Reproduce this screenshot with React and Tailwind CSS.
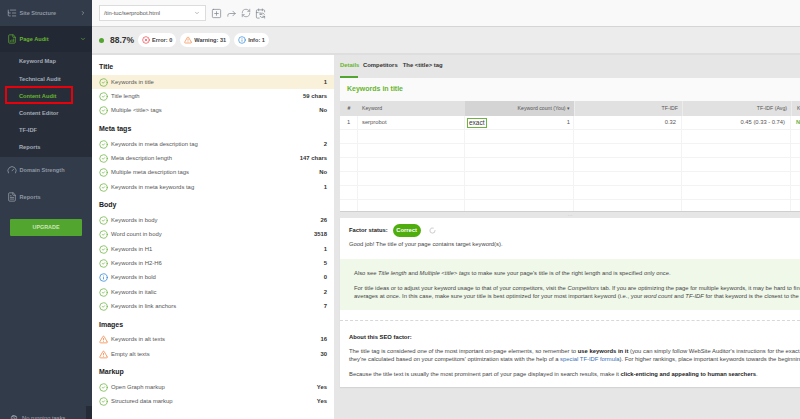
import React from "react";
import { CircleCheck, TriangleAlert, Info, CircleX, SquarePlus, Forward, RefreshCw, CalendarSync, ChevronDown, ChevronRight, ListTree, Gauge, FileText, FileBarChart, ClipboardList, LoaderCircle } from "lucide-react";

const groups = [
  { title: "Title", rows: [["ok", "Keywords in title", "1", true], ["ok", "Title length", "59 chars"], ["ok", "Multiple <title> tags", "No"]] },
  { title: "Meta tags", rows: [["ok", "Keywords in meta description tag", "2"], ["ok", "Meta description length", "147 chars"], ["ok", "Multiple meta description tags", "No"], ["ok", "Keywords in meta keywords tag", "1"]] },
  { title: "Body", rows: [["ok", "Keywords in body", "26"], ["ok", "Word count in body", "3518"], ["ok", "Keywords in H1", "1"], ["ok", "Keywords in H2-H6", "5"], ["info", "Keywords in bold", "0"], ["ok", "Keywords in italic", "2"], ["ok", "Keywords in link anchors", "7"]] },
  { title: "Images", rows: [["warn", "Keywords in alt texts", "16"], ["warn", "Empty alt texts", "30"]] },
  { title: "Markup", rows: [["ok", "Open Graph markup", "Yes"], ["ok", "Structured data markup", "Yes"]] },
];

function StatusIcon({ kind }) {
  if (kind === "warn") return <TriangleAlert size={9} strokeWidth={2} className="text-[#f4803c] shrink-0" />;
  if (kind === "info") return <Info size={9} strokeWidth={2} className="text-[#2f86d6] shrink-0" />;
  return <CircleCheck size={9} strokeWidth={2} className="text-[#6cb33f] shrink-0" />;
}

function SideItem({ icon: Icon, label, chevron, green, className = "" }) {
  return (
    <div className={`h-[26px] flex items-center pl-[7px] pr-[6px] ${className}`}>
      <Icon size={10} strokeWidth={1.6} className={green ? "text-[#67b52f]" : "text-[#a6adb8]"} />
      <span className={`ml-[2.5px] text-[5.6px] font-bold ${green ? "text-[#67b52f]" : "text-[#8f97a3]"}`}>{label}</span>
      {chevron === "right" && <ChevronRight size={6} strokeWidth={2.5} className="ml-auto text-[#a6adb8]" />}
      {chevron === "down" && <ChevronDown size={6} strokeWidth={2.5} className="ml-auto text-[#67b52f]" />}
    </div>
  );
}

function SubItem({ label, green }) {
  return <div className={`h-[17.2px] flex items-center pl-[19px] text-[5.7px] font-bold ${green ? "text-[#67b52f]" : "text-[#a5acb7]"}`}>{label}</div>;
}

function Sidebar() {
  return (
    <aside className="relative w-[92px] shrink-0 h-full bg-[#323b49] flex flex-col">
      <SideItem icon={ListTree} label="Site Structure" chevron="right" />
      <SideItem icon={FileBarChart} label="Page Audit" chevron="down" green className="bg-[#222935]" />
      <div className="bg-[#272e3a] pt-[1px] h-[105px]">
        <SubItem label="Keyword Map" />
        <SubItem label="Technical Audit" />
        <SubItem label="Content Audit" green />
        <SubItem label="Content Editor" />
        <SubItem label="TF-IDF" />
        <SubItem label="Reports" />
      </div>
      <SideItem icon={Gauge} label="Domain Strength" />
      <SideItem icon={FileText} label="Reports" className="mt-[1px]" />
      <div className="mx-[10px] mt-[9px] h-[17px] rounded-[1px] bg-[#52a52e] flex items-center justify-center text-[5.4px] font-bold text-[#cfe6bd]">UPGRADE</div>
      <div className="mt-auto h-[13px] flex items-center pl-[10px] translate-y-[6px]">
        <ClipboardList size={8} className="text-[#a6adb8]" />
        <span className="ml-[4px] text-[5.8px] text-[#a5acb7]">No running tasks</span>
      </div>
      <div className="absolute right-0 bottom-0 w-[6px] h-[13px] bg-[#252c38]" />
      <div className="absolute left-[5px] top-[86px] w-[68px] h-[18px] border-2 border-[#e8000b]" />
    </aside>
  );
}

function Toolbar() {
  return (
    <div className="h-[27px] shrink-0 bg-[#f9f9f9] border-b border-[#d5d5d5] flex items-center pl-[7px]">
      <div className="w-[107px] h-[16px] bg-white border border-[#dcdcdc] flex items-center pl-[4px] pr-[5px] text-[5.8px] text-[#555]">
        <span>/tin-tuc/serprobot.html</span>
        <ChevronDown size={6} className="ml-auto text-[#777]" />
      </div>
      <div className="ml-[5px] flex items-center gap-[4px] text-[#7e8790]">
        <SquarePlus size={11} strokeWidth={1.6} />
        <Forward size={11} strokeWidth={1.6} />
        <RefreshCw size={10} strokeWidth={1.6} />
        <CalendarSync size={11} strokeWidth={1.6} />
      </div>
    </div>
  );
}

function Pill({ icon: Icon, color, children }) {
  return (
    <div className="h-[14px] px-[4px] rounded-full bg-white flex items-center gap-[2px] text-[5.6px] font-bold text-[#444]">
      <Icon size={8} strokeWidth={2} className={color} />
      <span>{children}</span>
    </div>
  );
}

function StatsBar() {
  return (
    <div className="h-[28px] shrink-0 bg-[#ececec] border-b-2 border-[#dedede] flex items-center pl-[7px]">
      <span className="w-[5px] h-[5px] rounded-full bg-[#52a52e]" />
      <span className="ml-[6px] text-[8.5px] font-bold text-[#333]">88.7%</span>
      <div className="ml-[4px] flex items-center gap-[4px]">
        <Pill icon={CircleX} color="text-[#e2424a]">Error: 0</Pill>
        <Pill icon={TriangleAlert} color="text-[#f4803c]">Warning: 31</Pill>
        <Pill icon={Info} color="text-[#2f86d6]">Info: 1</Pill>
      </div>
    </div>
  );
}

function FactorList() {
  return (
    <div className="w-[242px] shrink-0 bg-white pt-[4.6px]">
      {groups.map((g) => (
        <div key={g.title} className="mb-[3.6px]">
          <div className="h-[15.4px] pl-[7px] flex items-center text-[7px] font-bold text-[#222]">{g.title}</div>
          {g.rows.map(([kind, label, val, active]) => (
            <div key={label} className={`h-[14.33px] pl-[6.5px] pr-[7px] flex items-center ${active ? "bg-[#f9f1da]" : ""}`}>
              <StatusIcon kind={kind} />
              <span className="ml-[3.5px] text-[5.9px] text-[#555]">{label}</span>
              <span className="ml-auto text-[5.9px] font-bold text-[#333]">{val}</span>
            </div>
          ))}
        </div>
      ))}
    </div>
  );
}

const cols = ["w-[18px]", "w-[107px]", "w-[109px]", "w-[108px]", "w-[109px]", "w-[40px]"];

function KeywordTable() {
  return (
    <div className="h-[111px] shrink-0 bg-white overflow-hidden border-b border-[#cfcfcf]">
      <div className="h-[15px] flex bg-[#e1e1e1] text-[5.2px] text-[#555]">
        <div className={`${cols[0]} shrink-0 flex items-center justify-center font-bold`}>#</div>
        <div className={`${cols[1]} shrink-0 flex items-center pl-[4px]`}>Keyword</div>
        <div className={`${cols[2]} shrink-0 flex items-center justify-end pr-[4px] bg-[#d4d4d4]`}>Keyword count (You) ▾</div>
        <div className={`${cols[3]} shrink-0 flex items-center justify-end pr-[4px] border-l border-[#ececec]`}>TF-IDF</div>
        <div className={`${cols[4]} shrink-0 flex items-center justify-end pr-[4px] border-l border-[#ececec]`}>TF-IDF (Avg)</div>
        <div className={`${cols[5]} shrink-0 flex items-center pl-[5px] border-l border-[#ececec]`}>Keyword</div>
      </div>
      <div className="h-[14px] flex border-b border-[#f3f3f3] text-[5.8px] text-[#555]">
        <div className={`${cols[0]} shrink-0 flex items-center justify-center border-r border-[#f3f3f3]`}>1</div>
        <div className={`${cols[1]} shrink-0 flex items-center pl-[4px] border-r border-[#f3f3f3]`}>serprobot</div>
        <div className={`${cols[2]} shrink-0 flex items-center justify-between pl-[2px] pr-[3px] border-r border-[#f3f3f3]`}>
          <span className="border border-[#6cb33f] px-[1px] h-[10px] flex items-center text-[6.5px] text-[#333]">exact</span>
          <span>1</span>
        </div>
        <div className={`${cols[3]} shrink-0 flex items-center justify-end pr-[5px] border-r border-[#f3f3f3]`}>0.32</div>
        <div className={`${cols[4]} shrink-0 flex items-center justify-end pr-[5px] border-r border-[#f3f3f3]`}>0.45 (0.33 - 0.74)</div>
        <div className={`${cols[5]} shrink-0 flex items-center pl-[5px] text-[#6cb33f] font-bold`}>No</div>
      </div>
      {[0, 1, 2, 3, 4, 5].map((i) => (
        <div key={i} className="h-[14px] flex border-b border-[#f3f3f3]">
          {cols.map((c, j) => <div key={j} className={`${c} shrink-0 border-r border-[#f3f3f3]`} />)}
        </div>
      ))}
    </div>
  );
}

function Details() {
  return (
    <div className="h-[169px] shrink-0 bg-white text-[5.85px] leading-[8px] text-[#444] whitespace-nowrap overflow-hidden shadow-[0_1px_1px_#d4d4d4]">
      <div className="h-[24px] pl-[9px] flex items-center">
        <b className="text-[#222]">Factor status:</b>
        <span className="ml-[5px] h-[13px] w-[28px] rounded-full bg-[#4fae0d] text-white font-bold flex items-center justify-center">Correct</span>
        <LoaderCircle size={7} className="ml-[8px] text-[#aaa]" />
      </div>
      <div className="pl-[9px] h-[8px] mt-[-2px]">Good job! The title of your page contains target keyword(s).</div>
      <div className="mt-[11px] h-[51px] bg-[#f0f8ea] pl-[14px] pt-[10px]">
        <div>Also see <i>Title length</i> and <i>Multiple &lt;title&gt; tags</i> to make sure your page's title is of the right length and is specified only once.</div>
        <div className="mt-[7px]">For title ideas or to adjust your keyword usage to that of your competitors, visit the <i>Competitors</i> tab. If you are optimizing the page for multiple keywords, it may be hard to fine-tune</div>
        <div>averages at once. In this case, make sure your title is best optimized for your most important keyword (i.e., your <i>word count</i> and <i>TF-IDF</i> for that keyword is the closest to the competitors').</div>
      </div>
      <div className="mt-[10px] border-t border-dashed border-[#d8d8d8]" />
      <div className="pl-[9px] pt-[11.5px]">
        <b className="text-[#222]">About this SEO factor:</b>
        <div className="mt-[6.5px]">The title tag is considered one of the most important on-page elements, so remember to <b className="text-[#222]">use keywords in it</b> (you can simply follow WebSite Auditor's instructions for the exact</div>
        <div>they're calculated based on your competitors' optimization stats with the help of a <span className="text-[#3a6fb5]">special TF-IDF formula</span>). For higher rankings, place important keywords towards the beginning</div>
        <div className="mt-[7px]">Because the title text is usually the most prominent part of your page displayed in search results, make it <b className="text-[#222]">click-enticing and appealing to human searchers</b>.</div>
      </div>
    </div>
  );
}

function RightPane() {
  return (
    <div className="flex-1 min-w-0 bg-[#e6e6e6] pl-[6px] overflow-hidden flex flex-col">
      <div className="h-[23px] shrink-0 flex items-end gap-[5px] text-[5.9px] font-bold text-[#333]">
        <span className="h-[23px] flex items-center text-[#67b52f] border-b-2 border-[#52a52e] w-[18px]">Details</span>
        <span className="h-[23px] flex items-center pb-[2px]">Competitors</span>
        <span className="h-[23px] flex items-center pb-[2px]">The &lt;title&gt; tag</span>
      </div>
      <div className="h-[23px] shrink-0 bg-[#fafafa] flex items-center pl-[7px] text-[7px] font-bold text-[#67b52f]">Keywords in title</div>
      <KeywordTable />
      <div className="h-[6px] shrink-0 flex items-center justify-center text-[5px] text-[#bbb] leading-none">···</div>
      <Details />
    </div>
  );
}

export default function App() {
  return (
    <div className="w-[800px] h-[419px] flex overflow-hidden font-['Liberation_Sans',Arial,sans-serif]">
      <Sidebar />
      <main className="flex-1 min-w-0 flex flex-col h-full">
        <Toolbar />
        <StatsBar />
        <div className="flex-1 min-h-0 flex bg-[#e6e6e6]">
          <FactorList />
          <RightPane />
        </div>
      </main>
    </div>
  );
}
